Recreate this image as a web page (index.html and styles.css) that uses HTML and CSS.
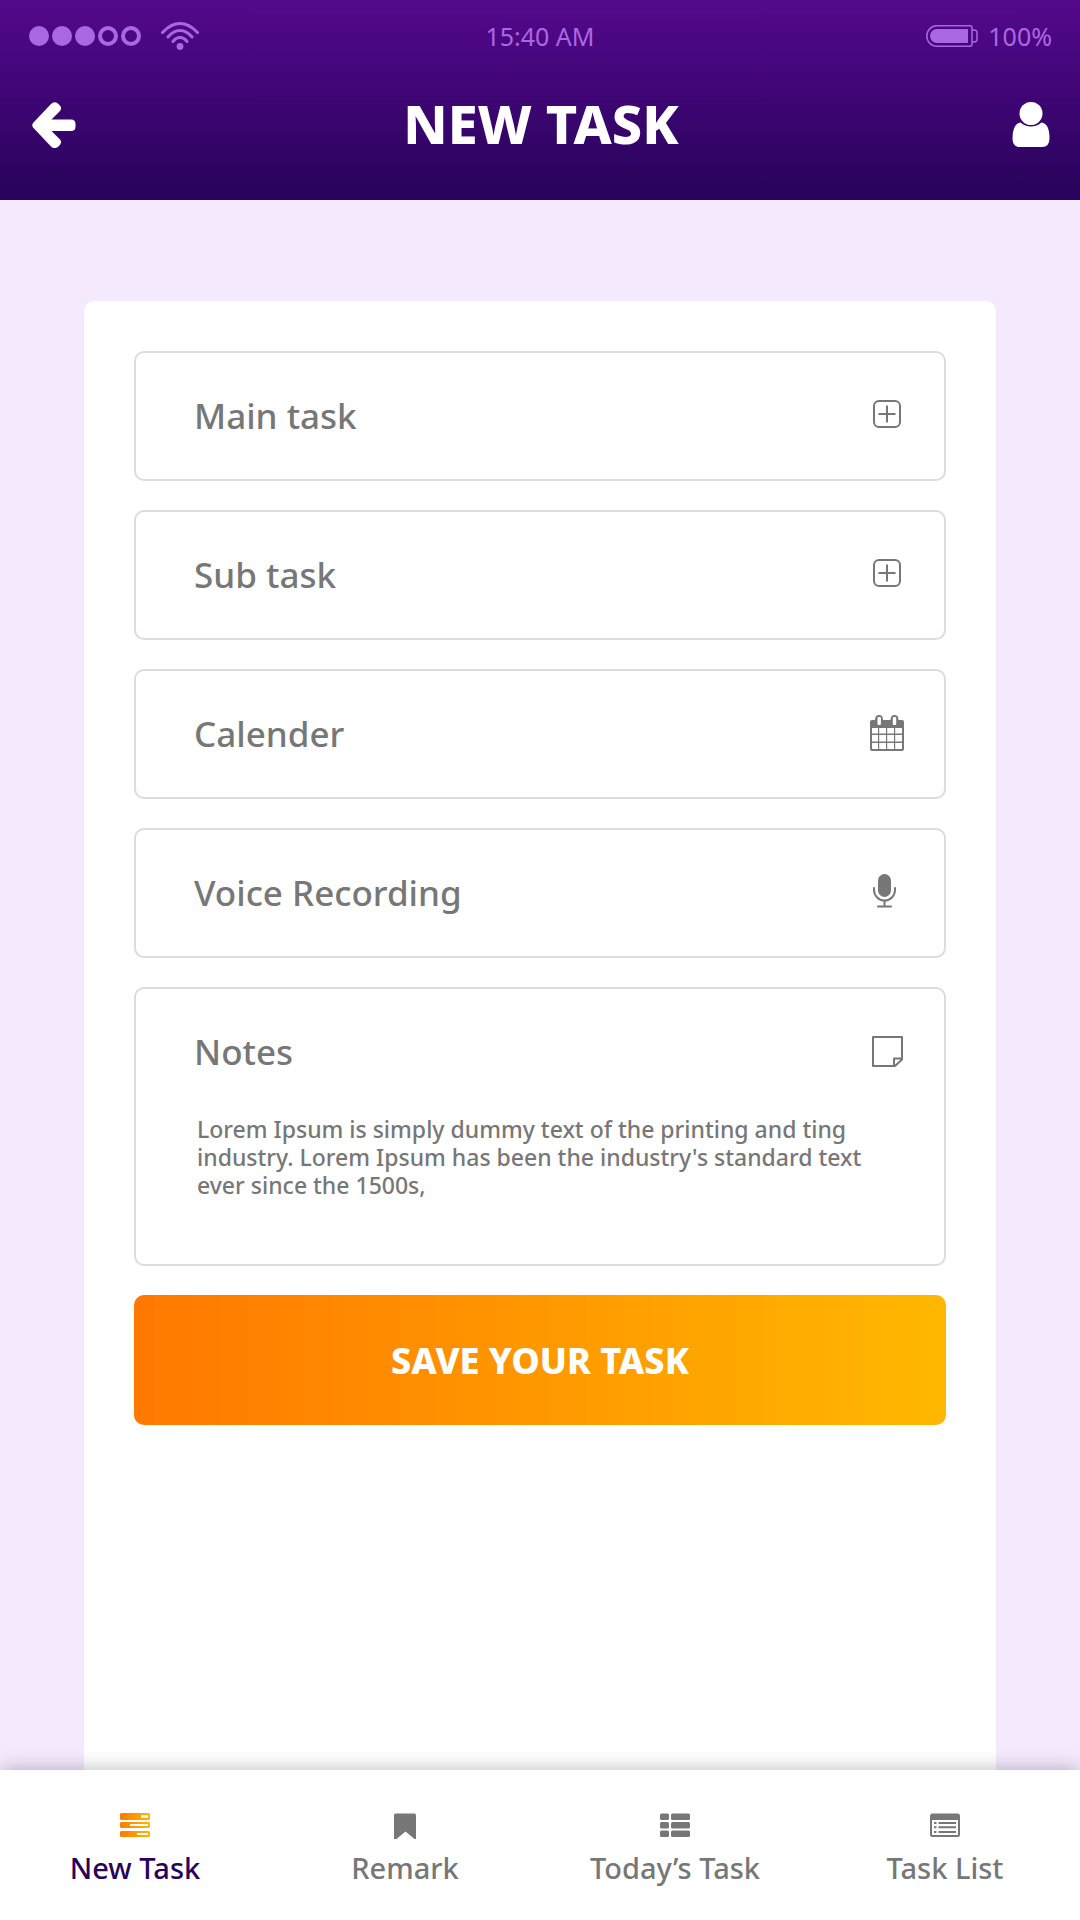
FILE: index.html
```html
<!DOCTYPE html>
<html lang="en">
<head>
<meta charset="utf-8">
<meta name="viewport" content="width=device-width, initial-scale=1">
<title>New Task</title>
<link rel="stylesheet" href="styles.css">
</head>
<body>
<div class="app">
  <header class="header">
    <div class="status">
      <div class="status-left">
        <svg class="signal" viewBox="0 0 112 20" width="112" height="20" aria-hidden="true">
          <circle cx="10" cy="10" r="10"/><circle cx="33" cy="10" r="10"/><circle cx="56" cy="10" r="10"/>
          <circle class="ring" cx="79" cy="10" r="8"/><circle class="ring" cx="102" cy="10" r="8"/>
        </svg>
        <svg class="wifi" viewBox="0 0 38 28" width="38" height="28" aria-hidden="true">
          <path d="M1.500 10.500Q10 1.500 19 1.500T36.500 10.500M7 15Q12.500 8.500 19 8.500T31 15M12 19.500Q15 15.500 19 15.500T26 19.500"/>
          <circle cx="19" cy="24.500" r="3.400"/>
        </svg>
      </div>
      <time class="clock">15:40 AM</time>
      <div class="status-right">
        <svg class="battery" viewBox="0 0 52 22" width="52" height="22" aria-hidden="true">
          <path class="outline" d="M11 .8H44Q46 .8 46 3V19Q46 21.200 44 21.200H11A10.200 10.200 0 0 1 11 .8ZM46 5H48Q51 5 51 8V14Q51 17 48 17H46"/>
          <path class="charge" d="M11 4H41Q42 4 42 5V17Q42 18 41 18H11A7 7 0 0 1 11 4Z"/>
        </svg>
        <span>100%</span>
      </div>
    </div>
    <div class="titlebar">
      <button class="bar-button" type="button" aria-label="Back">
        <svg viewBox="0 0 44 46" width="44" height="46"><path d="M1.500 20.500L19 2Q23 -1.500 27 2.500T27.500 9.500L19.500 17.500H39Q43.500 17.500 43.500 22V24.500Q43.500 29 39 29H19.500L27.500 37Q31 40 27 44T19 44.500L1.500 26Q-1 23 1.500 20.500Z" fill="#fff"/></svg>
      </button>
      <h1 class="title">NEW TASK</h1>
      <button class="bar-button profile" type="button" aria-label="Profile">
        <svg viewBox="0 0 38 46" width="38" height="46" fill="#fff"><circle cx="19" cy="11.500" r="11.500"/><path d="M8.500 20.500Q13 24.500 19 24.500T29.500 20.500Q37.500 21.500 37.500 36.500Q37.500 45 30 45H8Q.5 45 .5 36.500Q.5 21.500 8.500 20.500Z"/></svg>
      </button>
    </div>
  </header>

  <main class="main">
    <form class="card">
      <div class="field">
        <input class="field-input" type="text" placeholder="Main task" aria-label="Main task">
        <button class="icon-button" type="button" aria-label="Add main task">
          <svg class="icon line" viewBox="0 -1 36 36"><rect x="5" y="3" width="26" height="26" rx="5"/><path d="M18 7.500V24.500M9.500 16H26.500"/></svg>
        </button>
      </div>
      <div class="field">
        <input class="field-input" type="text" placeholder="Sub task" aria-label="Sub task">
        <button class="icon-button" type="button" aria-label="Add sub task">
          <svg class="icon line" viewBox="0 -1 36 36"><rect x="5" y="3" width="26" height="26" rx="5"/><path d="M18 7.500V24.500M9.500 16H26.500"/></svg>
        </button>
      </div>
      <div class="field">
        <input class="field-input" type="text" placeholder="Calender" aria-label="Calender">
        <button class="icon-button" type="button" aria-label="Pick a date">
          <svg class="icon" viewBox="0 0 36 36"><path fill-rule="evenodd" d="M3 5H6Q6 0 10 0T14 5H21.500Q21.500 0 25.500 0T29.500 5H33Q35 5 35 7V34Q35 36 33 36H3Q1 36 1 34V7Q1 5 3 5ZM3 13V18.500H9V13ZM10.200 13V18.500H17V13ZM18.200 13V18.500H25V13ZM26.200 13V18.500H33V13ZM3 20V26.500H9V20ZM10.200 20V26.500H17V20ZM18.200 20V26.500H25V20ZM26.200 20V26.500H33V20ZM3 28V34H9V28ZM10.200 28V34H17V28ZM18.200 28V34H25V28ZM26.200 28V34H33V28Z"/><rect x="8.500" y="2" width="3.400" height="8" rx="1" fill="#fff"/><rect x="23.800" y="2" width="3.400" height="8" rx="1" fill="#fff"/></svg>
        </button>
      </div>
      <div class="field">
        <input class="field-input" type="text" placeholder="Voice Recording" aria-label="Voice Recording">
        <button class="icon-button" type="button" aria-label="Record voice">
          <svg class="icon" viewBox="0 0 36 36"><rect x="9" y="0" width="13" height="23" rx="6.500"/><path class="line" d="M5 14V16A10.500 10.500 0 0 0 26 16V14M15.500 27V32M9 32.500H22" stroke-linecap="round"/></svg>
        </button>
      </div>
      <div class="field notes">
        <div class="notes-head">
          <label class="notes-label" for="notes">Notes</label>
          <svg class="icon line" viewBox="0 0 36 36" aria-hidden="true"><path d="M4 3H33V25.500L26 32H4ZM33 24.500H25V32" stroke-linejoin="round"/></svg>
        </div>
        <textarea class="notes-text" id="notes" rows="3">Lorem Ipsum is simply dummy text of the printing and ting industry. Lorem Ipsum has been the industry's standard text ever since the 1500s,</textarea>
      </div>
      <button class="save" type="submit">SAVE YOUR TASK</button>
    </form>
  </main>

  <nav class="tabs" aria-label="Main">
    <a class="tab active" href="#new">
      <svg viewBox="0 0 30 26" width="30" height="26"><defs><linearGradient id="amber"><stop stop-color="#ff7a00"/><stop offset="1" stop-color="#ffb800"/></linearGradient></defs><path fill="url(#amber)" fill-rule="evenodd" d="M1 0H29L30 1V6L29 7H1L0 6V1ZM21 2.300V4.700H28V2.300ZM1 9H29L30 10V14L29 15H1L0 14V10ZM10 11V13H28V11ZM1 18H29L30 19V23L29 24H1L0 23V19ZM17 20V22H28V20Z"/></svg>
      <span>New Task</span>
    </a>
    <a class="tab" href="#remark">
      <svg viewBox="0 0 30 26" width="30" height="26"><path d="M5.500 .5H24.500Q26 .5 26 2.500V26H24.500L15.500 18.500L6.500 26H4V2.500Q4 .5 5.500 .5Z"/></svg>
      <span>Remark</span>
    </a>
    <a class="tab" href="#today">
      <svg viewBox="0 0 30 26" width="30" height="26"><rect y=".5" width="9" height="6.500" rx="1.500"/><rect x="11" y=".5" width="19" height="6.500" rx="1.500"/><rect y="9" width="9" height="6.500" rx="1.500"/><rect x="11" y="9" width="19" height="6.500" rx="1.500"/><rect y="17.500" width="9" height="6.500" rx="1.500"/><rect x="11" y="17.500" width="19" height="6.500" rx="1.500"/></svg>
      <span>Today’s Task</span>
    </a>
    <a class="tab" href="#list">
      <svg viewBox="0 0 30 26" width="30" height="26"><path fill-rule="evenodd" d="M2.500 .5H27.500Q30 .5 30 3V21.500Q30 24 27.500 24H2.500Q0 24 0 21.500V3Q0 .5 2.500 .5ZM2 7V22H28V7Z"/><path d="M4 9H6.500V11H4ZM8.500 9H26V11H8.500ZM4 13.200H6.500V15.200H4ZM8.500 13.200H26V15.200H8.500ZM4 18H6.500V20H4ZM8.500 18H26V20H8.500Z"/></svg>
      <span>Task List</span>
    </a>
  </nav>
</div>
</body>
</html>
```
FILE: styles.css
```css
*,
*::before,
*::after {
  box-sizing: border-box;
}

body {
  margin: 0;
  background: #f5e9fe;
  color: #777;
  font-family: "Noto Sans", "Open Sans", sans-serif;
}

button,
input,
textarea {
  padding: 0;
  border: 0;
  background: none;
  color: inherit;
  font: inherit;
}

button {
  cursor: pointer;
}

svg {
  display: block;
  flex: none;
}

.app {
  display: flex;
  flex-direction: column;
  min-height: 100vh;
}

/* Header */
.header {
  height: 200px;
  padding: 0 28px;
  background: linear-gradient(#54088c, #27035a);
}

.status,
.titlebar {
  display: grid;
  grid-template-columns: 1fr auto 1fr;
  align-items: center;
}

.status {
  height: 72px;
  color: #a968e2;
  fill: #a968e2;
  font-size: 25px;
  line-height: 32px;
}

.status-left,
.status-right {
  display: flex;
  align-items: center;
}

.status-left {
  gap: 20px;
  padding-left: 1px;
}

.status-right {
  justify-content: flex-end;
  gap: 10px;
}

.ring,
.wifi path,
.outline {
  fill: none;
  stroke: #a968e2;
}

.ring {
  stroke-width: 4;
}

.wifi path {
  stroke-width: 3;
  stroke-linecap: round;
}

.outline {
  stroke-width: 1.5;
}

.titlebar {
  height: 106px;
  padding: 0 2px 0 4px;
}

.bar-button {
  justify-self: start;
}

.profile {
  justify-self: end;
}

.title {
  margin: 0;
  padding-bottom: 4px;
  color: #fff;
  font-size: 54px;
  font-weight: 800;
  line-height: 64px;
}

/* Task form */
.main {
  display: flex;
  flex: 1;
  padding: 101px 84px 0;
}

.card {
  display: flex;
  flex: 1;
  flex-direction: column;
  gap: 29px;
  min-width: 0;
  padding: 50px 50px 0;
  border-radius: 10px 10px 0 0;
  background: #fff;
}

.field {
  display: flex;
  align-items: center;
  gap: 16px;
  height: 130px;
  padding: 0 39px 0 58px;
  border: 2px solid #dcdcdc;
  border-radius: 10px;
}

.field-input,
.notes-label {
  flex: 1;
  min-width: 0;
  font-size: 35px;
  font-weight: 500;
  line-height: 48px;
}

.field-input::placeholder {
  color: inherit;
  opacity: 1;
}

.icon-button {
  margin-bottom: 2px;
}

.icon {
  width: 36px;
  height: 36px;
  fill: #777;
}

.line {
  fill: none;
  stroke: #777;
  stroke-width: 2;
}

.notes {
  flex-direction: column;
  align-items: stretch;
  gap: 0;
  height: auto;
  padding-bottom: 65px;
}

.notes-head {
  display: flex;
  align-items: center;
  height: 126px;
}

.notes-text {
  display: block;
  margin-left: 3px;
  overflow: hidden;
  font-size: 23px;
  font-weight: 500;
  line-height: 28px;
  resize: none;
}

.save {
  height: 130px;
  border-radius: 10px;
  background: linear-gradient(90deg, #ff7800, #ffb800);
  color: #fff;
  font-size: 36px;
  font-weight: 800;
}

/* Bottom navigation */
.tabs {
  display: grid;
  grid-template-columns: repeat(4, 1fr);
  height: 150px;
  padding-top: 43px;
  background: #fff;
  box-shadow: 0 0 20px rgba(0, 0, 0, 0.28);
}

.tab {
  display: flex;
  flex-direction: column;
  align-items: center;
  gap: 9px;
  color: #777;
  fill: #777;
  font-size: 29px;
  font-weight: 500;
  line-height: 40px;
  text-decoration: none;
}

.active {
  color: #27035a;
}
```
